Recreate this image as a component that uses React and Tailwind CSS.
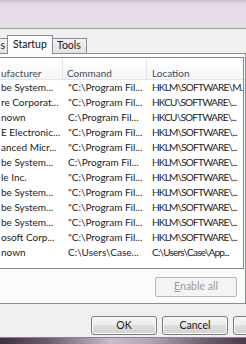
const ROWS = [
  ['be System...', '"C:\\Program Fil...', 'HKLM\\SOFTWARE\\M..'],
  ['re Corporat...', '"C:\\Program Fil...', 'HKCU\\SOFTWARE\\...'],
  ['nown', 'C:\\Program Fil...', 'HKCU\\SOFTWARE\\...'],
  ['E Electronic...', '"C:\\Program Fil...', 'HKLM\\SOFTWARE\\...'],
  ['anced Micr...', '"C:\\Program Fil...', 'HKLM\\SOFTWARE\\...'],
  ['be System...', 'C:\\Program Fil...', 'HKLM\\SOFTWARE\\...'],
  ['le Inc.', '"C:\\Program Fil...', 'HKLM\\SOFTWARE\\...'],
  ['be System...', '"C:\\Program Fil...', 'HKLM\\SOFTWARE\\...'],
  ['be System...', '"C:\\Program Fil...', 'HKLM\\SOFTWARE\\...'],
  ['be System...', '"C:\\Program Fil...', 'HKLM\\SOFTWARE\\...'],
  ['osoft Corp...', '"C:\\Program Fil...', 'HKLM\\SOFTWARE\\...'],
  ['nown', 'C:\\Users\\Case...', 'C:\\Users\\Case\\App...'],
]

const font = "font-['Lato','Open_Sans',sans-serif]"
const btn = 'h-[19px] w-[66px] shrink-0 rounded-[3px] border border-[#7a7a7a] bg-[linear-gradient(#f4f4f4,#ececec_50%,#dedede_50%,#d2d2d2)] shadow-[inset_0_0_0_1px_#fbfbfb] flex items-center justify-center text-[10.5px] text-[#1a1a1a]'

export default function App() {
  return (
    <div className={`w-[246px] h-[344px] overflow-hidden bg-[#f0f0f0] flex flex-col ${font}`}>
      {/* title glass */}
      <div className="h-[3px] bg-[#cdc3cf] border-b border-[#ddd4df]" />
      <div className="h-[25px] bg-[linear-gradient(#e4d9e6,#e9dfea)]" />
      <div className="h-px bg-[#9c9c9c]" />

      <div className="flex-1 flex flex-col pt-[6px]">
        {/* tabs */}
        <div className="flex items-end h-[18px] -ml-[10px] relative z-10">
          <div className="w-[18px] h-[15px] border border-b-0 border-[#898c95] bg-[linear-gradient(#f3f3f3,#e2e2e2)] flex items-center justify-end pr-[2px] text-[10.5px] text-[#222]">s</div>
          <div className="-ml-px w-[46px] h-[19px] -mb-px border border-b-0 border-[#898c95] bg-[#fcfcfc] flex items-center pl-[5px] pb-px text-[10.5px] text-[#111]">Startup</div>
          <div className="-ml-px w-[35px] h-[15px] border border-b-0 border-[#898c95] bg-[linear-gradient(#f3f3f3,#e2e2e2)] flex items-center pl-[4px] text-[10.5px] text-[#222]">Tools</div>
        </div>

        {/* tab page */}
        <div className="-ml-[10px] w-[256px] h-[251px] border border-[#898c95] bg-[#fbfbfb] pt-[3px] pl-[3px] pr-px flex flex-col">
          <div className="h-[212px] border border-[#828790] bg-white overflow-hidden">
            <div className="grid grid-cols-[68px_84px_96px] h-[22px] bg-[linear-gradient(#ffffff,#f5f6f7)] border-b border-[#e2e4e7] text-[10px] text-[#3e4a58]">
              <div className="border-r border-[#e3e5e8] pl-[6px] pt-[8px] whitespace-nowrap">ufacturer</div>
              <div className="border-r border-[#e3e5e8] pl-[4px] pt-[8px]">Command</div>
              <div className="pl-[5px] pt-[8px]">Location</div>
            </div>
            {ROWS.map((r, i) => (
              <div key={i} className="grid grid-cols-[68px_84px_96px] h-[15px] items-center text-[10px] text-[#1c1c1c] whitespace-nowrap">
                <div className="pl-[6px]">{r[0]}</div>
                <div className="pl-[5px]">{r[1]}</div>
                <div className="pl-[5px] tracking-[-0.8px]">{r[2]}</div>
              </div>
            ))}
          </div>
          <div className="flex justify-end mt-[8px] pr-[7px]">
            <div className="h-[20px] w-[82px] rounded-[2px] border border-[#b4b8bb] bg-[#f4f4f4] flex items-center justify-center text-[10.5px] text-[#9a9a9a]">
              <span><span className="underline">E</span>nable all</span>
            </div>
          </div>
        </div>

        {/* dialog buttons */}
        <div className="flex gap-[5px] pl-[91px] mt-[12px]">
          <div className={btn}>OK</div>
          <div className={btn}>Cancel</div>
          <div className={btn}></div>
        </div>
      </div>

      {/* window frame bottom */}
      <div className="h-[7px] border-t border-[#8d7f8c] bg-[linear-gradient(to_right,#3e3040,#6f5c6e_20%,#cdb9cc_45%,#b9a5b8_60%,#6a586a_85%,#4b3b4b)]" />
    </div>
  )
}
